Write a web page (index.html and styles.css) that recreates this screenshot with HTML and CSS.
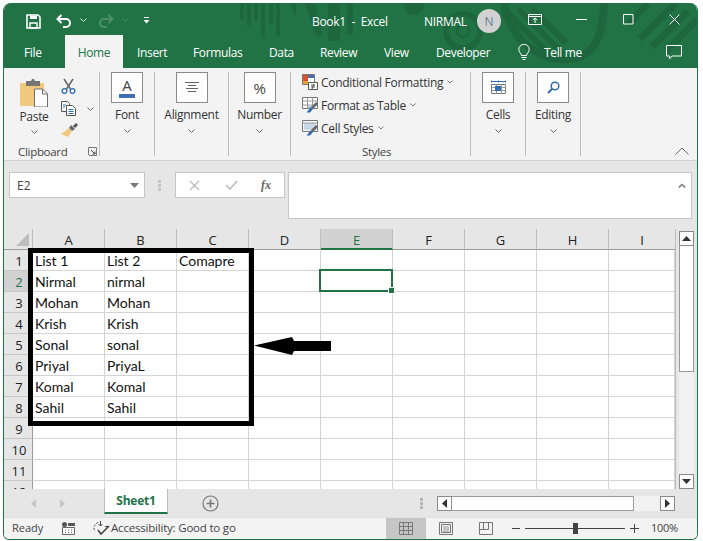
FILE: index.html
```html
<!DOCTYPE html>
<html lang="en">
<head>
<meta charset="utf-8">
<title>Book1 - Excel</title>
<link rel="stylesheet" href="styles.css">
</head>
<body>
<div class="window">
  <div class="chrome">
  <svg class="deco" width="693" height="65" viewBox="0 0 693 65"><g fill="#1d663e"><rect x="236" y="0" width="4" height="17"/><rect x="243" y="0" width="4" height="24"/><rect x="250" y="0" width="4" height="18"/><rect x="257" y="0" width="4" height="33"/><rect x="265" y="0" width="4" height="20"/><rect x="272" y="0" width="4" height="33"/><path d="M286 0h6v14z"/><path d="M301 0h10l8 33h-7z"/><rect x="324" y="0" width="12" height="38"/><rect x="343" y="0" width="6" height="32"/><circle cx="410" cy="2" r="10"/></g><g fill="none" stroke="#1d663e"><circle cx="459" cy="28" r="17" stroke-width="6"/><circle cx="459" cy="28" r="6" stroke-width="3"/><path d="M500 -4c2 30 25 60 62 60c22 0 38-14 38-60" stroke-width="8"/><path d="M500 6l52 52M514 6l50 50M528 6l34 34" stroke-width="6"/><path d="M636 36l36-36M648 44l36-36M662 48l31-31M624 22l20-22" stroke-width="7"/></g></svg>
  <header class="titlebar">
    <svg class="qat save" width="15" height="15" viewBox="0 0 15 15"><path d="M1 1h11l2 2v11H1z" fill="none" stroke="#fff" stroke-width="1.6"/><path d="M4 1.500h7v3.500H4z" fill="#fff"/><path d="M4 9h7v5H4z" fill="none" stroke="#fff" stroke-width="1.4"/></svg>
    <svg class="qat undo" width="16" height="14" viewBox="0 0 16 14"><path d="M5.500 1L1.500 5l4 4" fill="none" stroke="#fff" stroke-width="2"/><path d="M2 5h8a4 4 0 0 1 0 8H7" fill="none" stroke="#fff" stroke-width="2"/></svg>
    <svg class="qat chev-a" width="7" height="4" viewBox="0 0 7 4"><path d="M.5.500l3 3 3-3" fill="none" stroke="#dfeee6"/></svg>
    <svg class="qat redo" width="16" height="14" viewBox="0 0 16 14"><path d="M10.500 1l4 4-4 4" fill="none" stroke="#4d8f6b" stroke-width="2"/><path d="M14 5H6a4 4 0 0 0 0 8h3" fill="none" stroke="#4d8f6b" stroke-width="2"/></svg>
    <svg class="qat chev-b" width="7" height="4" viewBox="0 0 7 4"><path d="M.5.500l3 3 3-3" fill="none" stroke="#4d8f6b"/></svg>
    <svg class="qat more" width="7" height="7" viewBox="0 0 7 7"><path d="M1 .5h5" stroke="#fff"/><path d="M.5 3h6L3.500 6.500z" fill="#fff"/></svg>
    <span class="doc">Book1&nbsp;&nbsp;-&nbsp;&nbsp;Excel</span>
    <span class="user">NIRMAL</span>
    <span class="avatar">N</span>
    <svg class="win display" width="14" height="11" viewBox="0 0 14 11"><path d="M.5.500h13v10H.5zM.5 2.500h13" fill="none" stroke="#fff"/><path d="M7 9V4M4.800 6L7 4l2.200 2" fill="none" stroke="#fff"/></svg>
    <svg class="win min" width="11" height="1" viewBox="0 0 11 1"><path d="M0 .5h11" stroke="#fff"/></svg>
    <svg class="win max" width="11" height="11" viewBox="0 0 11 11"><path d="M.5.500h9.500v9.500H.5z" fill="none" stroke="#fff"/></svg>
    <svg class="win close" width="11" height="11" viewBox="0 0 11 11"><path d="M.5.500l10 10M10.500.500l-10 10" stroke="#fff"/></svg>
  </header>

  <nav class="tabs">
    <span class="tab tab-file">File</span>
    <span class="tab tab-home">Home</span>
    <span class="tab tab-insert">Insert</span>
    <span class="tab tab-formulas">Formulas</span>
    <span class="tab tab-data">Data</span>
    <span class="tab tab-review">Review</span>
    <span class="tab tab-view">View</span>
    <span class="tab tab-dev">Developer</span>
    <svg class="bulb" width="12" height="17" viewBox="0 0 12 17"><path d="M3.500 11.500C3 9 .8 8 .8 5.500a5.200 5.200 0 0 1 10.400 0c0 2.500-2.200 3.500-2.700 6z" fill="none" stroke="#fff"/><path d="M3.500 13.500h5M4.500 15.500h3" stroke="#fff"/></svg>
    <span class="tab tab-tell">Tell me</span>
    <svg class="comment" width="16" height="15" viewBox="0 0 16 15"><path d="M.5.500h15v10.500H6L3.500 14v-3H.5z" fill="none" stroke="#fff"/></svg>
  </nav>
  </div>

  <section class="ribbon">
    <div class="group g-clip">
      <div class="paste">
        <svg width="28" height="29" viewBox="0 0 28 29"><path d="M0 5h24v23H0z" fill="#efc97e"/><path d="M6 3h5l1-2h2l1 2h5v5H6z" fill="#767676"/><path d="M14.500 11h8l5 5v13h-13z" fill="#fff" stroke="#6e6e6e"/><path d="M22.500 11v5h5" fill="none" stroke="#6e6e6e"/></svg>
        <span class="rb-label">Paste</span>
        <svg class="chev paste-chev" width="7" height="4" viewBox="0 0 7 4"><path d="M.5.500l3 3 3-3" fill="none" stroke="#666"/></svg>
      </div>
      <div class="clip-tools">
        <svg width="15" height="16" viewBox="0 0 15 16"><path d="M3 1l6.500 10M12 1L5.500 11" stroke="#666" stroke-width="1.500"/><circle cx="3.500" cy="13" r="2.400" fill="none" stroke="#2f6db3" stroke-width="1.300"/><circle cx="11.500" cy="13" r="2.400" fill="none" stroke="#2f6db3" stroke-width="1.300"/></svg>
        <div class="copy-row">
          <svg width="15" height="15" viewBox="0 0 15 15"><path d="M.5.500h6l2 2v8H.5z" fill="#fff" stroke="#555"/><path d="M5.500 4.500h6l3 3v7h-9z" fill="#fff" stroke="#555"/><path d="M7.500 8.500h5M7.500 10.500h5M7.500 12.500h5M2 4h3M2 6h2" stroke="#2f6db3"/></svg>
          <svg class="chev copy-chev" width="7" height="4" viewBox="0 0 7 4"><path d="M.5.500l3 3 3-3" fill="none" stroke="#666"/></svg>
        </div>
        <svg width="17" height="15" viewBox="0 0 17 15"><path d="M10 2l4 4-3 2-3-3z" fill="#666"/><path d="M8 5l3 3-4 6-7-3 3-2z" fill="#efc97e"/><path d="M12 3l3-3 2 2-3 3z" fill="#555"/></svg>
      </div>
      <span class="g-name clip-name">Clipboard</span>
      <svg class="launcher" width="9" height="9" viewBox="0 0 9 9"><path d="M.5 8V.5H8.500V8.500H1" fill="none" stroke="#777"/><path d="M3 3l4 4M7 4.500V7H4.500" fill="none" stroke="#444"/></svg>
    </div>

    <div class="group g-font">
      <div class="rb-box font-box"><span class="font-a">A</span><i class="font-bar"></i></div>
      <span class="rb-label">Font</span>
      <svg class="chev" width="7" height="4" viewBox="0 0 7 4"><path d="M.5.500l3 3 3-3" fill="none" stroke="#666"/></svg>
    </div>

    <div class="group g-align">
      <div class="rb-box">
        <svg width="14" height="11" viewBox="0 0 14 11"><path d="M0 .5h14M3 3.500h8M1 6.500h12M3 9.500h8" stroke="#666"/></svg>
      </div>
      <span class="rb-label">Alignment</span>
      <svg class="chev" width="7" height="4" viewBox="0 0 7 4"><path d="M.5.500l3 3 3-3" fill="none" stroke="#666"/></svg>
    </div>

    <div class="group g-number">
      <div class="rb-box"><span class="percent">%</span></div>
      <span class="rb-label">Number</span>
      <svg class="chev" width="7" height="4" viewBox="0 0 7 4"><path d="M.5.500l3 3 3-3" fill="none" stroke="#666"/></svg>
    </div>

    <div class="group g-styles">
      <div class="style-row">
        <svg width="16" height="16" viewBox="0 0 16 16"><path d="M.5.500h12v10H.5z" fill="#fff" stroke="#777"/><path d="M1 1h5v3H1z" fill="#d9542b"/><path d="M6 1h6v3H6z" fill="#3f6fb0"/><path d="M1 4h5v3H1z" fill="#d9542b"/><path d="M1 7h5v3H1z" fill="#e8a33d"/><path d="M6.500 8.500h9v7h-9z" fill="#fff" stroke="#555"/><path d="M9 11h4M9 13h4M12 10l-2 5" stroke="#333" stroke-width=".8"/></svg>
        <span>Conditional Formatting</span>
        <svg class="chev-in" width="6" height="4" viewBox="0 0 6 4"><path d="M.5.500L3 3 5.500.500" fill="none" stroke="#777"/></svg>
      </div>
      <div class="style-row">
        <svg width="16" height="16" viewBox="0 0 16 16"><path d="M.5.500h15v11H.5z" fill="#fff" stroke="#777"/><path d="M.5 4h15M.5 8h15M5.500.500v11M10.500.500v11" stroke="#999"/><path d="M6 8h5v3H6z" fill="#b9cfe6"/><path d="M14 5l2 2-5 5-2-2z" fill="#666"/><path d="M9 10l2 2-3 3.500H4.500z" fill="#2f6db3"/></svg>
        <span>Format as Table</span>
        <svg class="chev-in" width="6" height="4" viewBox="0 0 6 4"><path d="M.5.500L3 3 5.500.500" fill="none" stroke="#777"/></svg>
      </div>
      <div class="style-row">
        <svg width="16" height="16" viewBox="0 0 16 16"><path d="M.5.500h15v11H.5z" fill="#fff" stroke="#777"/><path d="M2 3h12v7H2z" fill="#c9d8e8"/><path d="M.5 3h15" stroke="#999"/><path d="M14 5l2 2-5 5-2-2z" fill="#666"/><path d="M9 10l2 2-3 3.500H4.500z" fill="#2f6db3"/></svg>
        <span>Cell Styles</span>
        <svg class="chev-in" width="6" height="4" viewBox="0 0 6 4"><path d="M.5.500L3 3 5.500.500" fill="none" stroke="#777"/></svg>
      </div>
      <span class="g-name styles-name">Styles</span>
    </div>

    <div class="group g-cells">
      <div class="rb-box">
        <svg width="15" height="15" viewBox="0 0 15 15"><path d="M.5 1.500h14M.5.500v2M14.500.500v2M7.500.500v2" stroke="#2f6db3"/><path d="M.5 4.500h14v9H.5z" fill="#fff" stroke="#777"/><path d="M.5 7.500h14M.5 10.500h14M5.500 4.500v9M10.500 4.500v9" stroke="#999"/><path d="M4 6h6v5H4z" fill="#2f6db3"/></svg>
      </div>
      <span class="rb-label">Cells</span>
      <svg class="chev" width="7" height="4" viewBox="0 0 7 4"><path d="M.5.500l3 3 3-3" fill="none" stroke="#666"/></svg>
    </div>

    <div class="group g-edit">
      <div class="rb-box">
        <svg width="13" height="13" viewBox="0 0 13 13"><circle cx="8" cy="5" r="3.800" fill="none" stroke="#2f6db3" stroke-width="1.500"/><path d="M5.200 7.800L1 12" stroke="#2f6db3" stroke-width="2"/></svg>
      </div>
      <span class="rb-label">Editing</span>
      <svg class="chev" width="7" height="4" viewBox="0 0 7 4"><path d="M.5.500l3 3 3-3" fill="none" stroke="#666"/></svg>
    </div>

    <svg class="collapse" width="14" height="8" viewBox="0 0 14 8"><path d="M.5 7.500L7 1l6.500 6.500" fill="none" stroke="#666"/></svg>
  </section>

  <section class="formula">
    <div class="namebox"><span>E2</span><svg width="9" height="5" viewBox="0 0 9 5"><path d="M0 0h9L4.500 5z" fill="#777"/></svg></div>
    <svg class="grip" width="3" height="11" viewBox="0 0 3 11"><path d="M0 0h3v3H0zM0 4h3v3H0zM0 8h3v3H0z" fill="#c4c4c4"/></svg>
    <div class="fxbox">
      <svg width="11" height="11" viewBox="0 0 11 11"><path d="M1 1l9 9M10 1l-9 9" stroke="#bdbdbd" stroke-width="1.400"/></svg>
      <svg width="13" height="10" viewBox="0 0 13 10"><path d="M1 5l4 4 7-8" fill="none" stroke="#bdbdbd" stroke-width="1.600"/></svg>
      <span class="fx">fx</span>
    </div>
    <div class="input">
      <svg width="8" height="5" viewBox="0 0 8 5"><path d="M.8 4.500L4 1.500l3.200 3" fill="none" stroke="#777" stroke-width="1.500"/></svg>
    </div>
  </section>

  <section class="workarea">
    <div class="sheet">
      <div class="sheet-grid">
        <div class="corner"><svg width="13" height="13" viewBox="0 0 13 13"><path d="M13 0v13H0z" fill="#bdbdbd"/></svg></div>
        <div class="ch">A</div><div class="ch">B</div><div class="ch">C</div><div class="ch">D</div><div class="ch ch-on">E</div><div class="ch">F</div><div class="ch">G</div><div class="ch">H</div><div class="ch ch-last">I</div>

        <div class="rh">1</div><div class="c">List 1</div><div class="c">List 2</div><div class="c">Comapre</div><div class="c"></div><div class="c"></div><div class="c"></div><div class="c"></div><div class="c"></div><div class="c"></div>
        <div class="rh rh-on">2</div><div class="c">Nirmal</div><div class="c">nirmal</div><div class="c"></div><div class="c"></div><div class="c c-sel"><span class="selection"><i class="handle"></i></span></div><div class="c"></div><div class="c"></div><div class="c"></div><div class="c"></div>
        <div class="rh">3</div><div class="c">Mohan</div><div class="c">Mohan</div><div class="c"></div><div class="c"></div><div class="c"></div><div class="c"></div><div class="c"></div><div class="c"></div><div class="c"></div>
        <div class="rh">4</div><div class="c">Krish</div><div class="c">Krish</div><div class="c"></div><div class="c"></div><div class="c"></div><div class="c"></div><div class="c"></div><div class="c"></div><div class="c"></div>
        <div class="rh">5</div><div class="c">Sonal</div><div class="c">sonal</div><div class="c"></div><div class="c"></div><div class="c"></div><div class="c"></div><div class="c"></div><div class="c"></div><div class="c"></div>
        <div class="rh">6</div><div class="c">Priyal</div><div class="c">PriyaL</div><div class="c"></div><div class="c"></div><div class="c"></div><div class="c"></div><div class="c"></div><div class="c"></div><div class="c"></div>
        <div class="rh">7</div><div class="c">Komal</div><div class="c">Komal</div><div class="c"></div><div class="c"></div><div class="c"></div><div class="c"></div><div class="c"></div><div class="c"></div><div class="c"></div>
        <div class="rh">8</div><div class="c">Sahil</div><div class="c">Sahil</div><div class="c"></div><div class="c"></div><div class="c"></div><div class="c"></div><div class="c"></div><div class="c"></div><div class="c"></div>
        <div class="rh">9</div><div class="c"></div><div class="c"></div><div class="c"></div><div class="c"></div><div class="c"></div><div class="c"></div><div class="c"></div><div class="c"></div><div class="c"></div>
        <div class="rh">10</div><div class="c"></div><div class="c"></div><div class="c"></div><div class="c"></div><div class="c"></div><div class="c"></div><div class="c"></div><div class="c"></div><div class="c"></div>
        <div class="rh">11</div><div class="c"></div><div class="c"></div><div class="c"></div><div class="c"></div><div class="c"></div><div class="c"></div><div class="c"></div><div class="c"></div><div class="c"></div>
        <div class="rh">12</div><div class="c"></div><div class="c"></div><div class="c"></div><div class="c"></div><div class="c"></div><div class="c"></div><div class="c"></div><div class="c"></div><div class="c"></div>
      </div>
      <div class="callout-box"></div>
      <svg class="callout-arrow" width="77" height="18" viewBox="0 0 77 18"><path d="M0 8.500L38 0l2 4 37 0v10H40l-2 4z" fill="#000"/></svg>
    </div>
    <div class="vscroll">
      <div class="sb-btn"><svg width="9" height="5" viewBox="0 0 9 5"><path d="M4.500 0L9 5H0z" fill="#333"/></svg></div>
      <div class="v-thumb"></div>
      <div class="sb-track"></div>
      <div class="sb-btn"><svg width="9" height="5" viewBox="0 0 9 5"><path d="M0 0h9L4.500 5z" fill="#333"/></svg></div>
    </div>
  </section>

  <section class="sheetbar">
    <svg class="nav nav-l" width="5" height="9" viewBox="0 0 5 9"><path d="M5 0v9L0 4.500z" fill="#c6c6c6"/></svg>
    <svg class="nav nav-r" width="5" height="9" viewBox="0 0 5 9"><path d="M0 0v9l5-4.500z" fill="#c6c6c6"/></svg>
    <div class="sheet-tab">Sheet1</div>
    <svg class="add" width="17" height="17" viewBox="0 0 17 17"><circle cx="8.500" cy="8.500" r="7.500" fill="none" stroke="#777" stroke-width="1.200"/><path d="M8.500 4.500v8M4.500 8.500h8" stroke="#777" stroke-width="1.600"/></svg>
    <svg class="hgrip" width="3" height="11" viewBox="0 0 3 11"><path d="M0 0h3v3H0zM0 4h3v3H0zM0 8h3v3H0z" fill="#b5b5b5"/></svg>
    <div class="hscroll">
      <div class="sb-btn sb-h"><svg width="5" height="9" viewBox="0 0 5 9"><path d="M5 0v9L0 4.500z" fill="#333"/></svg></div>
      <div class="h-thumb"></div>
      <div class="sb-track"></div>
      <div class="sb-btn sb-h"><svg width="5" height="9" viewBox="0 0 5 9"><path d="M0 0v9l5-4.500z" fill="#333"/></svg></div>
    </div>
  </section>

  <footer class="status">
    <span class="ready">Ready</span>
    <svg class="macro" width="13" height="13" viewBox="0 0 13 13"><circle cx="2.500" cy="2.500" r="2.500" fill="#555"/><path d="M6 1h7v3H6z" fill="#555"/><path d="M.5 5.500h12v7H.5z" fill="#fff" stroke="#666"/><path d="M3 8h1M6 8h1M9 8h1M3 10.500h1M6 10.500h1M9 10.500h1" stroke="#555"/></svg>
    <svg class="a11y" width="17" height="15" viewBox="0 0 17 15"><path d="M5 1.500a6 6 0 0 0-3 9" fill="none" stroke="#444" stroke-dasharray="2 1.500"/><path d="M7.500 0v5M5.500 3l2 2 2-2" fill="none" stroke="#444"/><path d="M12 5.500h4" stroke="#444"/><path d="M5 9l3 4 8-8" fill="none" stroke="#444" stroke-width="1.600"/></svg>
    <span class="a11y-text">Accessibility: Good to go</span>
    <div class="view view-on"><svg width="14" height="13" viewBox="0 0 14 13"><path d="M.5.500h13v12H.5zM.5 4.500h13M.5 8.500h13M4.500.500v12M9.500.500v12" fill="none" stroke="#777"/></svg></div>
    <div class="view view-page"><svg width="14" height="13" viewBox="0 0 14 13"><path d="M.5.500h13v12H.5z" fill="none" stroke="#777"/><path d="M2.500 2.500h9v8h-9z" fill="none" stroke="#777"/><path d="M4 5h6M4 7h6M4 9h6" stroke="#777" stroke-width=".8"/></svg></div>
    <div class="view view-break"><svg width="14" height="13" viewBox="0 0 14 13"><path d="M.5.500h13v12H.5zM.5 7.500h9V.5M4.500.500v7" fill="none" stroke="#777"/></svg></div>
    <div class="zoom">
      <svg width="8" height="1" viewBox="0 0 8 1"><path d="M0 .5h8" stroke="#444"/></svg>
      <div class="slider"><i class="knob"></i></div>
      <svg width="9" height="9" viewBox="0 0 9 9"><path d="M0 4.500h9M4.500 0v9" stroke="#444"/></svg>
      <span class="pct">100%</span>
    </div>
  </footer>
</div>
</body>
</html>
```
FILE: styles.css
```css
* { box-sizing: border-box; }
html, body { margin: 0; padding: 0; }
body { width: 703px; height: 541px; background: #fff; overflow: hidden; font-family: "Open Sans", "Noto Sans", sans-serif; color: #333; }
svg { display: block; flex: none; }

.window { margin: 3px 0 0 3px; width: 695px; height: 537px; background: #f3f3f3; border: 1px solid #217346; border-top: 0; border-radius: 8px 8px 6px 6px; display: flex; flex-direction: column; overflow: hidden; }

.chrome { position: relative; flex: none; background: #217346; }
.deco { position: absolute; left: 0; top: 0; }
.titlebar { position: relative; height: 32px; display: flex; align-items: center; color: #fff; font-size: 12px; }
.save { margin-left: 22px; margin-top: 4px; }
.undo { margin-left: 15px; margin-top: 3px; }
.chev-a { margin-left: 8px; margin-top: 2px; }
.redo { margin-left: 11px; margin-top: 3px; }
.chev-b { margin-left: 8px; margin-top: 2px; }
.more { margin-left: 14px; margin-top: 3px; }
.doc { margin-left: 162px; width: 80px; letter-spacing: -.3px; white-space: nowrap; margin-top: 4px; }
.user { margin-left: 32px; width: 46px; letter-spacing: -.3px; margin-top: 4px; }
.avatar { margin-left: 7px; width: 24px; height: 24px; border-radius: 50%; background: #d2d2d2; color: #6d7d8c; display: flex; align-items: center; justify-content: center; font-size: 12px; margin-top: 4px; }
.display { margin-left: 27px; }
.min { margin-left: 34px; }
.max { margin-left: 36px; }
.close { margin-left: 35px; }

.tabs { height: 33px; display: flex; align-items: stretch; color: #fff; font-size: 12px; position: relative; letter-spacing: -.35px; }
.tab { display: flex; align-items: center; white-space: nowrap; padding-top: 2px; }
.tab-file { margin-left: 20px; width: 41px; }
.tab-home { width: 58px; background: #f3f3f3; color: #217346; justify-content: center; }
.tab-insert { margin-left: 14px; width: 56px; }
.tab-formulas { width: 76px; }
.tab-data { width: 51px; }
.tab-review { width: 64px; }
.tab-view { width: 52px; }
.tab-dev { width: 82px; }
.bulb { margin-top: 9px; }
.tab-tell { margin-left: 14px; width: 120px; }
.comment { margin-top: 10px; margin-left: 2px; }

.ribbon { position: relative; height: 93px; flex: none; background: #f3f3f3; border-bottom: 1px solid #d0d0d0; display: flex; padding-top: 4px; font-size: 12px; color: #333; letter-spacing: -.3px; }
.group { position: relative; height: 84px; border-right: 1px solid #bdbdbd; display: flex; flex-direction: column; align-items: center; flex: none; }
.g-clip { width: 96px; }
.g-font { width: 55px; }
.g-align { width: 74px; }
.g-number { width: 62px; }
.g-styles { width: 180px; align-items: flex-start; padding: 0 0 0 11px; gap: 3px; }
.g-cells { width: 55px; }
.g-edit { width: 55px; }
.rb-box { width: 32px; height: 31px; background: #fff; border: 1px solid #8a8a8a; display: flex; align-items: center; justify-content: center; margin-bottom: 3px; }
.rb-label { line-height: 17px; white-space: nowrap; }
.chev { margin-top: 6px; }
.font-box { flex-direction: column; gap: 0; }
.font-a { font-size: 15px; line-height: 15px; color: #444; letter-spacing: 0; }
.font-bar { display: block; width: 16px; height: 4px; background: #3f6fb0; margin-top: 1px; }
.percent { font-size: 15px; color: #444; }

.g-clip { flex-direction: row; align-items: flex-start; padding: 6px 0 0 16px; }
.paste { width: 28px; display: flex; flex-direction: column; align-items: center; }
.paste .rb-label { margin-top: 1px; }
.paste-chev { margin-top: 5px; }
.clip-tools { margin-left: 13px; display: flex; flex-direction: column; gap: 7px; margin-top: 0; }
.copy-row { display: flex; align-items: center; }
.copy-chev { margin-left: 11px; margin-top: 0; }
.g-name { position: absolute; top: 72px; font-size: 11.500px; line-height: 16px; color: #444; }
.clip-name { left: 14px; }
.styles-name { left: 71px; }
.launcher { position: absolute; left: 84px; top: 75px; }

.style-row { height: 20px; display: flex; align-items: center; white-space: nowrap; }
.style-row svg:first-child { margin-right: 3px; }
.chev-in { margin-left: 4px; }
.collapse { position: absolute; right: 8px; top: 79px; }

.formula { position: relative; height: 68px; flex: none; background: #e6e6e6; display: flex; align-items: flex-start; padding: 11px 5px 0 5px; }
.namebox { width: 136px; height: 26px; background: #fff; border: 1px solid #c6c6c6; display: flex; align-items: center; justify-content: space-between; padding: 0 5px 0 7px; font-size: 12px; color: #444; }
.grip { margin: 8px 14px 0 13px; }
.fxbox { width: 110px; height: 26px; background: #fff; border: 1px solid #c6c6c6; display: flex; align-items: center; padding-left: 13px; gap: 25px; }
.fx { font: italic 700 12px "Liberation Serif", serif; color: #666; margin-left: -2px; }
.input { margin-left: 3px; flex: 1; height: 47px; background: #fff; border: 1px solid #c6c6c6; display: flex; justify-content: flex-end; padding: 10px 5px 0 0; }

.workarea { height: 260px; flex: none; background: #e6e6e6; display: flex; }
.sheet { position: relative; width: 672px; height: 260px; overflow: hidden; flex: none; border-right: 1px solid #bcbcbc; background: #fff; }
.sheet-grid { display: grid; grid-template-columns: 29px repeat(8, 72px) 66px; grid-template-rows: 21px repeat(12, 21px); }
.corner { background: #e6e6e6; border-right: 1px solid #bdbdbd; border-bottom: 1px solid #9a9a9a; display: flex; justify-content: flex-end; align-items: flex-end; padding: 0 3px 3px 0; }
.ch { background: #e6e6e6; border-right: 1px solid #bdbdbd; border-bottom: 1px solid #9a9a9a; display: flex; align-items: center; justify-content: center; font-size: 13px; color: #222; padding-top: 2px; }
.ch-last { border-right: 0; }
.ch-on { background: #d2d2d2; color: #217346; border-bottom: 2px solid #217346; }
.rh { background: #e6e6e6; border-right: 1px solid #9a9a9a; border-bottom: 1px solid #c6c6c6; display: flex; align-items: center; justify-content: center; font-size: 13px; color: #222; padding: 2px 0 0 2px; }
.rh-on { background: #d2d2d2; color: #217346; }
.c { position: relative; border-right: 1px solid #d4d4d4; border-bottom: 1px solid #d4d4d4; font: 14px/20px "Lato", "Liberation Sans", sans-serif; color: #111; padding: 1px 0 0 2px; white-space: nowrap; }
.selection { position: absolute; left: -2px; top: -2px; width: 74px; height: 23px; border: 2px solid #217346; z-index: 1; }
.handle { position: absolute; right: -3px; bottom: -3px; width: 5px; height: 5px; background: #217346; border: 0; outline: 1px solid #fff; }

.callout-box { position: absolute; left: 24px; top: 19px; width: 226px; height: 178px; border: 5px solid #000; }
.callout-arrow { position: absolute; left: 250px; top: 108px; }

.vscroll { width: 15px; margin: 2px 0 0 3px; height: 258px; display: flex; flex-direction: column; background: #f1f1f1; }
.sb-btn { height: 15px; flex: none; background: #fff; border: 1px solid #8a8a8a; display: flex; align-items: center; justify-content: center; }
.v-thumb { height: 126px; background: #fff; border: 1px solid #9a9a9a; border-top: 0; flex: none; }
.sb-track { flex: 1; }

.sheetbar { height: 28px; flex: none; background: #e6e6e6; display: flex; align-items: flex-start; position: relative; }
.nav { margin-top: 10px; }
.nav-l { margin-left: 27px; }
.nav-r { margin-left: 24px; }
.sheet-tab { margin-left: 39px; width: 64px; height: 25px; background: #fff; border-bottom: 2px solid #217346; border-left: 1px solid #bdbdbd; border-right: 1px solid #bdbdbd; color: #217346; font-size: 12px; font-weight: 700; letter-spacing: -.2px; display: flex; align-items: center; justify-content: center; }
.add { margin: 6px 0 0 34px; }
.hgrip { margin: 9px 0 0 201px; }
.hscroll { margin: 7px 0 0 14px; width: 238px; height: 15px; display: flex; background: #f1f1f1; }
.sb-h { width: 15px; height: 15px; }
.h-thumb { width: 182px; background: #fff; border: 1px solid #9a9a9a; border-left: 0; }

.status { position: relative; height: 22px; flex: none; background: #f3f3f3; border-top: 1px solid #e0e0e0; display: flex; align-items: center; font-size: 11px; color: #444; }
.ready { margin: -2px 0 0 8px; width: 50px; }
.a11y { margin-left: 18px; }
.a11y-text { margin: -2px 0 0 1px; width: 275px; white-space: nowrap; font-size: 11.500px; letter-spacing: -.2px; }
.view { width: 40px; height: 22px; display: flex; align-items: center; justify-content: center; }
.view-on { background: #c6c6c6; }
.zoom { margin-left: 6px; display: flex; align-items: center; gap: 5px; }
.slider { position: relative; width: 100px; height: 1px; background: #444; }
.knob { position: absolute; left: 48px; top: -5px; width: 5px; height: 11px; background: #444; }
.pct { margin: -2px 0 0 7px; letter-spacing: -.3px; }
```
